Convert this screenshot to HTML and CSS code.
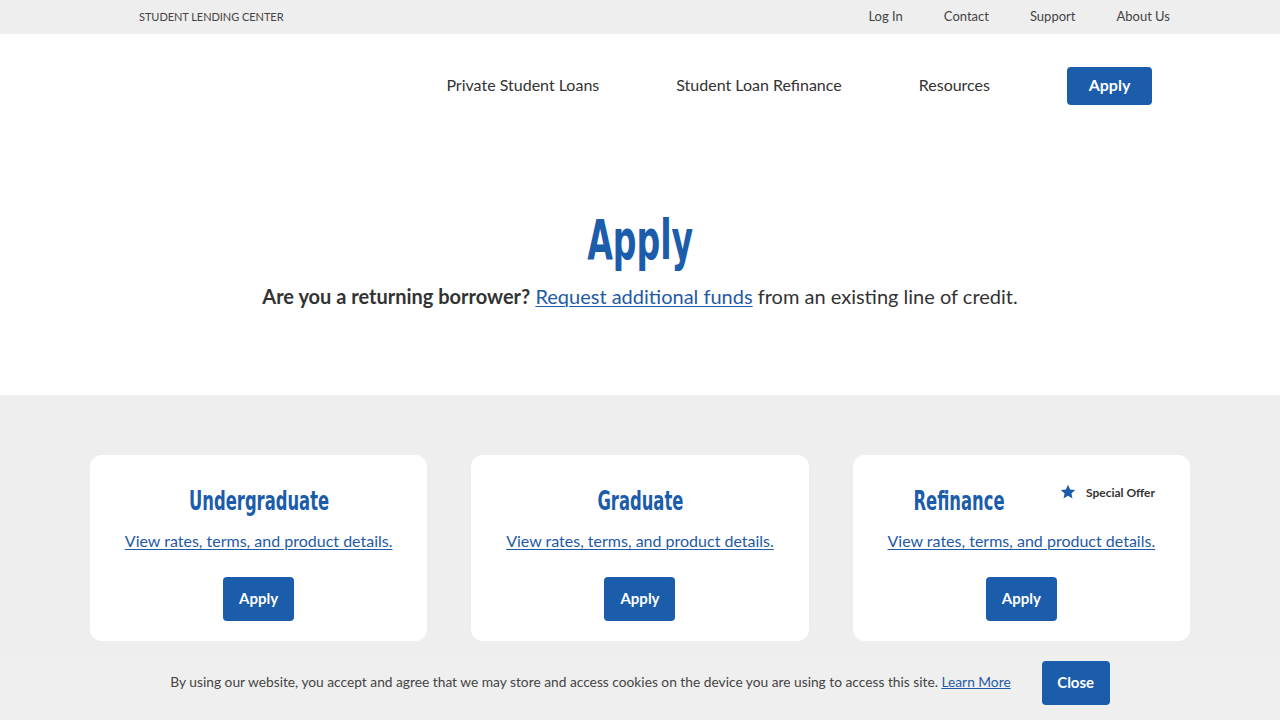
FILE: index.html
```html
<!DOCTYPE html>
<html lang="en">
<head>
<meta charset="utf-8">
<title>Apply | Student Lending Center</title>
<link rel="stylesheet" href="styles.css">
</head>
<body>
<div class="topbar">
  <div class="container topbar-inner">
    <span class="brand">STUDENT LENDING CENTER</span>
    <nav class="toplinks">
      <a href="#">Log In</a>
      <a href="#">Contact</a>
      <a href="#">Support</a>
      <a href="#">About Us</a>
    </nav>
  </div>
</div>
<header class="header">
  <div class="container header-inner">
    <nav class="mainnav">
      <a href="#">Private Student Loans</a>
      <a href="#">Student Loan Refinance</a>
      <a href="#">Resources</a>
      <a href="#" class="btn btn-nav">Apply</a>
    </nav>
  </div>
</header>
<section class="hero">
  <h1 class="hero-title"><span class="cond">Apply</span></h1>
  <p class="hero-sub"><strong>Are you a returning borrower?</strong> <a href="#">Request additional funds</a> from an existing line of credit.</p>
</section>
<section class="products">
  <div class="container cards">
    <div class="card">
      <h2 class="card-title"><span class="cond cond-sm">Undergraduate</span></h2>
      <a href="#" class="card-link">View rates, terms, and product details.</a>
      <a href="#" class="btn btn-card">Apply</a>
    </div>
    <div class="card">
      <h2 class="card-title"><span class="cond cond-sm">Graduate</span></h2>
      <a href="#" class="card-link">View rates, terms, and product details.</a>
      <a href="#" class="btn btn-card">Apply</a>
    </div>
    <div class="card">
      <span class="offer"><svg class="star" viewBox="0 0 24 24" width="16" height="16"><path d="M12 1.2l3.2 7 7.6.8-5.7 5.1 1.7 7.6L12 17.8l-6.8 3.9 1.7-7.6L1.2 9l7.6-.8z" fill="#1b5cab"/></svg>Special Offer</span>
      <h2 class="card-title card-title-offset"><span class="cond cond-sm">Refinance</span></h2>
      <a href="#" class="card-link">View rates, terms, and product details.</a>
      <a href="#" class="btn btn-card">Apply</a>
    </div>
  </div>
</section>
<div class="cookie">
  <p class="cookie-text">By using our website, you accept and agree that we may store and access cookies on the device you are using to access this site. <a href="#">Learn More</a></p>
  <a href="#" class="btn btn-close">Close</a>
</div>
</body>
</html>
```
FILE: styles.css
```css
* { box-sizing: border-box; }
html, body { margin: 0; padding: 0; }
body {
  font-family: Lato, "Open Sans", sans-serif;
  color: #333;
  background: #eeeeee;
}
a { color: inherit; text-decoration: none; }
.container { width: 1100px; margin: 0 auto; }

.topbar { background: #eeeeee; height: 34px; }
.topbar-inner { display: flex; align-items: center; justify-content: space-between; height: 32px; padding: 0 20px 0 49px; }
.brand { font-size: 11px; color: #444; letter-spacing: -0.05px; }
.toplinks { display: flex; gap: 41px; }
.toplinks a { font-size: 13px; color: #444; }

.header { background: #fff; }
.header-inner { height: 103px; display: flex; align-items: center; justify-content: flex-end; padding-right: 38px; }
.mainnav { display: flex; align-items: center; gap: 77px; }
.mainnav a { font-size: 16px; color: #333; line-height: 20px; padding-bottom: 2px; }

.btn { display: inline-flex; align-items: center; justify-content: center; background: #1b5cab; color: #fff; font-weight: 700; border-radius: 4px; }
.mainnav .btn-nav { color: #fff; width: 85px; height: 38px; font-size: 16px; padding: 0 0 2px; }

.cond {
  display: inline-block;
  font-family: "DejaVu Sans", sans-serif;
  font-stretch: condensed;
  font-weight: 700;
  transform: scaleX(0.67);
  transform-origin: center;
  white-space: nowrap;
}
.cond-sm { transform: scaleX(0.7); }

.hero { background: #fff; text-align: center; padding: 69px 0 85px; }
.hero-title { margin: 0; font-size: 55px; line-height: 64px; color: #1b5cab; font-weight: 700; }
.hero-sub { margin: 10px 0 0; font-size: 20px; line-height: 28px; color: #333; }
.hero-sub strong { font-weight: 700; }
.hero-sub a { color: #1f5aa6; text-decoration: underline; text-underline-offset: 2px; text-decoration-thickness: 1px; }

.products { background: #eeeeee; padding-top: 60px; height: 325px; }
.cards { display: grid; grid-template-columns: repeat(3, 1fr); gap: 44px; }
.card { position: relative; background: #fff; border-radius: 12px; height: 186px; padding: 28px 0 20px; display: flex; flex-direction: column; align-items: center; }
.card-title { margin: 0; font-size: 26px; line-height: 34px; color: #1b5cab; font-weight: 700; }
.card-title-offset { margin-right: 124px; }
.card-link { margin-top: 11px; font-size: 16px; line-height: 24px; color: #1f5aa6; text-decoration: underline; text-underline-offset: 2px; text-decoration-thickness: 1px; }
.btn-card { margin-top: 24px; width: 71px; height: 44px; font-size: 15px; padding-bottom: 2px; }
.offer { position: absolute; top: 29px; right: 35px; display: flex; align-items: center; gap: 10px; font-size: 12px; font-weight: 700; color: #333; }

.cookie { position: fixed; left: 0; right: 0; bottom: 0; background: #efefef; display: flex; align-items: center; justify-content: center; gap: 31px; padding: 6px 0 15px; }
.cookie-text { margin: 0; font-size: 13.75px; color: #444; padding-bottom: 3px; }
.cookie-text a { color: #1f5aa6; text-decoration: underline; }
.btn-close { width: 68px; height: 44px; font-size: 15px; padding-bottom: 2px; }
```
